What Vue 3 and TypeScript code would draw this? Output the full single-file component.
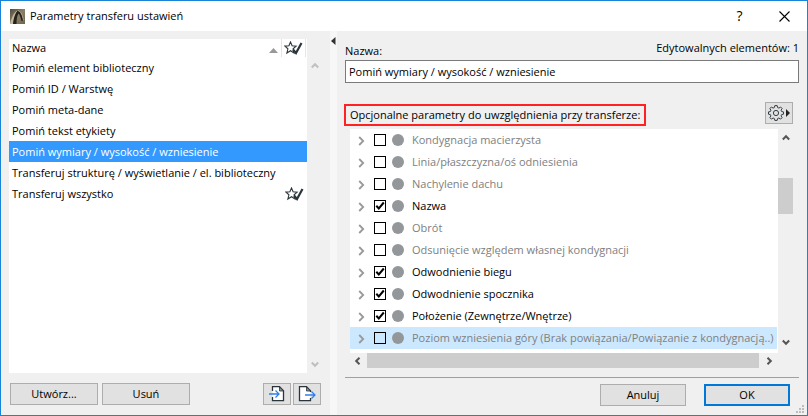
<script setup lang="ts">
import { ref } from 'vue'

interface Preset {
  name: string
  isDefault?: boolean
}

interface Param {
  label: string
  checked: boolean
}

const presets: Preset[] = [
  { name: 'Pomiń element biblioteczny' },
  { name: 'Pomiń ID / Warstwę' },
  { name: 'Pomiń meta-dane' },
  { name: 'Pomiń tekst etykiety' },
  { name: 'Pomiń wymiary / wysokość / wzniesienie' },
  { name: 'Transferuj strukturę / wyświetlanie / el. biblioteczny' },
  { name: 'Transferuj wszystko', isDefault: true },
]

const selected = ref(4)
const name = ref(presets[4].name)
const activeParam = ref(9)

const params = ref<Param[]>([
  { label: 'Kondygnacja macierzysta', checked: false },
  { label: 'Linia/płaszczyzna/oś odniesienia', checked: false },
  { label: 'Nachylenie dachu', checked: false },
  { label: 'Nazwa', checked: true },
  { label: 'Obrót', checked: false },
  { label: 'Odsunięcie względem własnej kondygnacji', checked: false },
  { label: 'Odwodnienie biegu', checked: true },
  { label: 'Odwodnienie spocznika', checked: true },
  { label: 'Położenie (Zewnętrze/Wnętrze)', checked: true },
  { label: 'Poziom wzniesienia góry (Brak powiązania/Powiązanie z kondygnacją..)', checked: false },
])

function choose(index: number) {
  selected.value = index
  name.value = presets[index].name
}
</script>

<template>
  <div class="dialog" role="dialog" aria-labelledby="dialog-title">
    <header class="titlebar">
      <svg class="app-icon" viewBox="0 0 15 15">
        <defs>
          <linearGradient id="arch" x1="0" y1="0" x2="1" y2="1">
            <stop offset="0" stop-color="#4f4a3d" />
            <stop offset="0.5" stop-color="#8a7f66" />
            <stop offset="1" stop-color="#6d644f" />
          </linearGradient>
        </defs>
        <rect width="15" height="15" fill="url(#arch)" />
        <path d="M0 15C1.500 9 4 3 7.500 1.500 5.500 5 4 10 3.500 15z" fill="#c4b99c" />
        <path d="M3 15C3.500 9 5.500 3.500 8 1.500c3 1 4.500 5 5.500 10l-2 .5C10.500 8 9.500 5 8.500 4.500 7 6.500 6.500 11 6.500 15z" fill="#25221c" />
        <path d="M8 1.500c3 1 4.500 5 5.500 10" fill="none" stroke="#c4b99c" stroke-width=".8" />
      </svg>
      <h1 id="dialog-title">Parametry transferu ustawień</h1>
      <button class="caption-btn help" type="button" aria-label="Pomoc">?</button>
      <button class="caption-btn" type="button" aria-label="Zamknij">
        <svg width="11" height="11" viewBox="0 0 11 11"><path d="M.5.500l10 10M10.500.500l-10 10" stroke="#000" stroke-width="1.100" /></svg>
      </button>
    </header>

    <div class="content">
      <section class="left">
        <div class="list-area">
          <div class="presets">
            <div class="list-head">
              <span class="head-name">Nazwa</span>
              <svg class="sort" width="9" height="5" viewBox="0 0 9 5"><path d="M0 5L4.500 0 9 5z" fill="#999" /></svg>
              <span class="head-star">
                <svg class="star" width="19" height="14" viewBox="0 0 19 14"><path d="M6.500 1l1.600 3.800 4 .3-3 2.700 1 4.200-3.600-2.300L2.900 12l1-4.200-3-2.700 4-.3z" fill="#fff" stroke="#2b363c" stroke-width="1.100" /><path d="M9 8.500l3 3.500L17.500 2" fill="none" stroke="#2b363c" stroke-width="2.200" /></svg>
              </span>
            </div>
            <ul>
              <li v-for="(p, i) in presets" :key="p.name">
                <button type="button" class="preset" :class="{ selected: i === selected }" @click="choose(i)">
                  <span>{{ p.name }}</span>
                  <svg v-if="p.isDefault" class="star" width="19" height="14" viewBox="0 0 19 14"><path d="M6.500 1l1.600 3.800 4 .3-3 2.700 1 4.200-3.600-2.300L2.900 12l1-4.200-3-2.700 4-.3z" fill="#fff" stroke="#2b363c" stroke-width="1.100" /><path d="M9 8.500l3 3.500L17.500 2" fill="none" stroke="#2b363c" stroke-width="2.200" /></svg>
                </button>
              </li>
            </ul>
          </div>
          <div class="vbar idle">
            <svg width="8" height="7" viewBox="0 0 8 7"><path d="M.8 5.500L4 2.200l3.200 3.300" fill="none" stroke="currentColor" stroke-width="2" /></svg>
            <svg width="8" height="7" viewBox="0 0 8 7"><path d="M.8 1.500L4 4.800l3.200-3.300" fill="none" stroke="currentColor" stroke-width="2" /></svg>
          </div>
        </div>
        <div class="left-actions">
          <button type="button" class="btn">Utwórz...</button>
          <button type="button" class="btn">Usuń</button>
          <span class="spacer"></span>
          <button type="button" class="btn icon" aria-label="Importuj">
            <svg width="18" height="16" viewBox="0 0 18 16"><path d="M4.500 5V.700h7l4 4v10h-11V11" fill="#fff" stroke="#2b363c" stroke-width="1.300" /><path d="M11.500 1v4h4z" fill="#8a9196" stroke="#2b363c" stroke-width=".8" /><path d="M1 8h10M7.500 4.500L11 8l-3.500 3.500" fill="none" stroke="#2f80ed" stroke-width="1.300" /></svg>
          </button>
          <button type="button" class="btn icon" aria-label="Eksportuj">
            <svg width="18" height="16" viewBox="0 0 18 16"><path d="M12.500 6V4.700l-4-4h-7v14h11V12" fill="#fff" stroke="#2b363c" stroke-width="1.300" /><path d="M8.500 1v4h4z" fill="#8a9196" stroke="#2b363c" stroke-width=".8" /><path d="M7 9h10M13.500 5.500L17 9l-3.500 3.500" fill="none" stroke="#2f80ed" stroke-width="1.300" /></svg>
          </button>
        </div>
      </section>

      <div class="splitter">
        <svg width="5" height="8" viewBox="0 0 5 8"><path d="M4.500 0v8L0 4z" fill="#333" /></svg>
      </div>

      <section class="right">
        <div class="name-row">
          <label for="preset-name">Nazwa:</label>
          <span class="count">Edytowalnych elementów: 1</span>
        </div>
        <input id="preset-name" v-model="name" class="name-input" type="text" />

        <div class="params-head">
          <h2>Opcjonalne parametry do uwzględnienia przy transferze:</h2>
          <button type="button" class="btn icon" aria-label="Ustawienia">
            <svg width="23" height="16" viewBox="0 0 23 16">
              <g fill="none" stroke="#343e44">
                <path d="M6.800.6h2.400l.4 1.900 1.300.6 1.700-1.100 1.500 1.500-1 1.700.5 1.300 1.900.4v2.300l-1.900.4-.5 1.300 1 1.700-1.500 1.500-1.700-1.100-1.300.6-.4 1.800H6.800l-.4-1.800-1.300-.6-1.700 1.100-1.500-1.500 1-1.700-.5-1.300-1.900-.4V6.900l1.900-.4.5-1.300-1-1.700L3.400 2l1.700 1.100 1.300-.6z" />
                <circle cx="8" cy="8" r="2.600" />
              </g>
              <path d="M18 4v8l4-4z" fill="#222" />
            </svg>
          </button>
        </div>

        <div class="params">
          <ul class="param-list">
            <li v-for="(p, i) in params" :key="p.label" :class="{ active: i === activeParam, on: p.checked }">
              <svg class="expander" width="7" height="10" viewBox="0 0 7 10"><path d="M1.200 1l4 4-4 4" fill="none" stroke="#999" stroke-width="1.800" /></svg>
              <label>
                <span class="check">
                  <input v-model="p.checked" type="checkbox" />
                  <svg v-if="p.checked" width="12" height="12" viewBox="0 0 12 12"><path d="M2.300 5.800l2.500 2.700 5-6" fill="none" stroke="#000" stroke-width="2" /></svg>
                </span>
                <span class="dot"></span>
                <span class="param-name">{{ p.label }}</span>
              </label>
            </li>
          </ul>
          <div class="vbar">
            <svg width="8" height="7" viewBox="0 0 8 7"><path d="M.8 5.500L4 2.200l3.200 3.300" fill="none" stroke="currentColor" stroke-width="2" /></svg>
            <div class="vtrack"><div class="vthumb"></div></div>
            <svg width="8" height="7" viewBox="0 0 8 7"><path d="M.8 1.500L4 4.800l3.200-3.300" fill="none" stroke="currentColor" stroke-width="2" /></svg>
          </div>
          <div class="hbar">
            <svg width="7" height="8" viewBox="0 0 7 8"><path d="M5.500.8L2.200 4l3.300 3.200" fill="none" stroke="currentColor" stroke-width="2" /></svg>
            <div class="hthumb"></div>
            <svg width="7" height="8" viewBox="0 0 7 8"><path d="M1.500.8L4.800 4 1.500 7.200" fill="none" stroke="currentColor" stroke-width="2" /></svg>
          </div>
        </div>

        <footer class="footer">
          <button type="button" class="btn">Anuluj</button>
          <button type="button" class="btn primary">OK</button>
        </footer>
      </section>
    </div>
    <svg class="grip" width="8" height="8" viewBox="0 0 8 8"><path d="M6 0h2v2H6zM3 3h2v2H3zM6 3h2v2H6zM0 6h2v2H0zM3 6h2v2H3zM6 6h2v2H6z" fill="#bcbcbc" /></svg>
  </div>
</template>

<style>
body {
  margin: 0;
}
</style>

<style scoped>
* {
  box-sizing: border-box;
}

.dialog {
  position: relative;
  display: flex;
  flex-direction: column;
  min-height: 100vh;
  border: 1px solid #1883d7;
  background: #f0f0f0;
  color: #000;
  font: 11px/16px "Open Sans", "Noto Sans", sans-serif;
}

button,
input {
  font: inherit;
  color: inherit;
}

ul {
  margin: 0;
  padding: 0;
  list-style: none;
}

svg {
  display: block;
  flex: none;
}

.titlebar {
  display: flex;
  align-items: center;
  height: 30px;
  padding-left: 9px;
  background: #fff;
}

.app-icon {
  width: 15px;
  height: 15px;
}

h1 {
  flex: 1;
  margin: 0 0 0 5px;
  font-size: 11px;
  font-weight: 400;
}

.caption-btn {
  display: grid;
  place-items: center;
  width: 45px;
  height: 30px;
  padding: 0;
  border: 0;
  background: none;
}

.help {
  font-size: 14px;
}

.content {
  display: flex;
  flex: 1;
}

.left {
  display: flex;
  flex-direction: column;
  flex: 313 1 0;
  padding: 8px 8px 10px;
}

.list-area {
  display: flex;
  flex: 1;
}

.presets {
  flex: 1;
  background: #fff;
}

.list-head {
  display: flex;
  align-items: center;
  height: 18px;
  padding-left: 3px;
}

.head-name {
  flex: 1;
}

.sort {
  margin: 4px 3px 0 0;
}

.head-star {
  display: flex;
  align-items: center;
  width: 25px;
  height: 18px;
  margin-right: 1px;
  padding-left: 2px;
  border: solid #e5e5e5;
  border-width: 0 1px;
}

.preset {
  display: flex;
  align-items: center;
  justify-content: space-between;
  width: 100%;
  height: 21px;
  padding: 0 3px;
  border: 0;
  background: none;
  text-align: left;
  white-space: nowrap;
}

.preset.selected {
  background: #3399ff;
  color: #fff;
}

.vbar {
  display: flex;
  flex-direction: column;
  align-items: center;
  justify-content: space-between;
  width: 15px;
  padding: 5px 0 7px;
  color: #555;
}

.vbar.idle {
  padding: 23px 0 5px;
  color: #bfbfbf;
}

.left-actions {
  display: flex;
  gap: 4px;
  padding: 10px 1px 0;
}

.spacer {
  flex: 1;
}

.btn {
  display: grid;
  place-items: center;
  width: 88px;
  height: 22px;
  padding: 0;
  border: 1px solid #adadad;
  background: #e1e1e1;
}

.btn.icon {
  width: 28px;
}

.btn.icon + .btn.icon {
  margin-left: -2px;
}

.splitter {
  width: 7px;
  padding: 6px 0 0 1px;
  background: #f7f7f7;
}

.right {
  display: flex;
  flex-direction: column;
  flex: 454 1 0;
  min-width: 0;
  padding: 10px 8px 9px;
}

.name-row {
  display: flex;
  justify-content: space-between;
  height: 19px;
}

.count {
  margin-top: -1px;
}

.name-input {
  width: 100%;
  height: 23px;
  padding: 0 3px;
  border: 1px solid #7a7a7a;
  border-radius: 0;
  background: #fff;
  outline: none;
}

.params-head {
  display: flex;
  align-items: flex-start;
  justify-content: space-between;
  padding: 19px 6px 3px 0;
}

h2 {
  margin: 2px 0 0 -1px;
  padding: 2px 4px;
  border: 2px solid #f22;
  font-size: 11px;
  font-weight: 400;
  line-height: 14px;
  white-space: nowrap;
}

.params {
  display: grid;
  grid-template-columns: minmax(0, 1fr) 15px;
  padding: 0 6px 9px 5px;
}

.param-list {
  padding-bottom: 4px;
  background: #fff;
}

.param-list li {
  display: flex;
  align-items: center;
  height: 22px;
  margin-right: 1px;
  padding-left: 8px;
  color: #808080;
  white-space: nowrap;
}

.param-list li.on {
  color: #000;
}

.param-list li.active {
  background: #cce8ff;
}

.expander {
  margin-top: 2px;
}

label {
  display: flex;
  align-items: center;
}

.param-list label {
  margin-left: 9px;
}

.check {
  display: grid;
}

.check > * {
  grid-area: 1 / 1;
}

.check input {
  width: 12px;
  height: 12px;
  margin: 0;
  border: 1px solid #000;
  background: #fff;
  appearance: none;
}

.active .check input {
  background: transparent;
}

.check svg {
  z-index: 1;
  pointer-events: none;
}

.dot {
  width: 12px;
  height: 12px;
  margin: 0 8px 0 6px;
  border-radius: 50%;
  background: #939799;
}

.vtrack {
  flex: 1;
  width: 15px;
  padding-top: 37px;
}

.vthumb {
  height: 36px;
  background: #cdcdcd;
}

.hbar {
  display: flex;
  align-items: center;
  gap: 6px;
  height: 15px;
  padding: 0 5px 0 4px;
  color: #555;
}

.hthumb {
  flex: 1;
  height: 15px;
  margin-right: 1px;
  background: #cdcdcd;
}

.footer {
  display: flex;
  justify-content: flex-end;
  gap: 18px;
  padding: 6px 9px 0 0;
  border-top: 1px solid #a0a0a0;
}

.footer .btn {
  width: 86px;
}

.btn.primary {
  border: 2px solid #0078d7;
}

.grip {
  position: absolute;
  right: 3px;
  bottom: 2px;
}
</style>
